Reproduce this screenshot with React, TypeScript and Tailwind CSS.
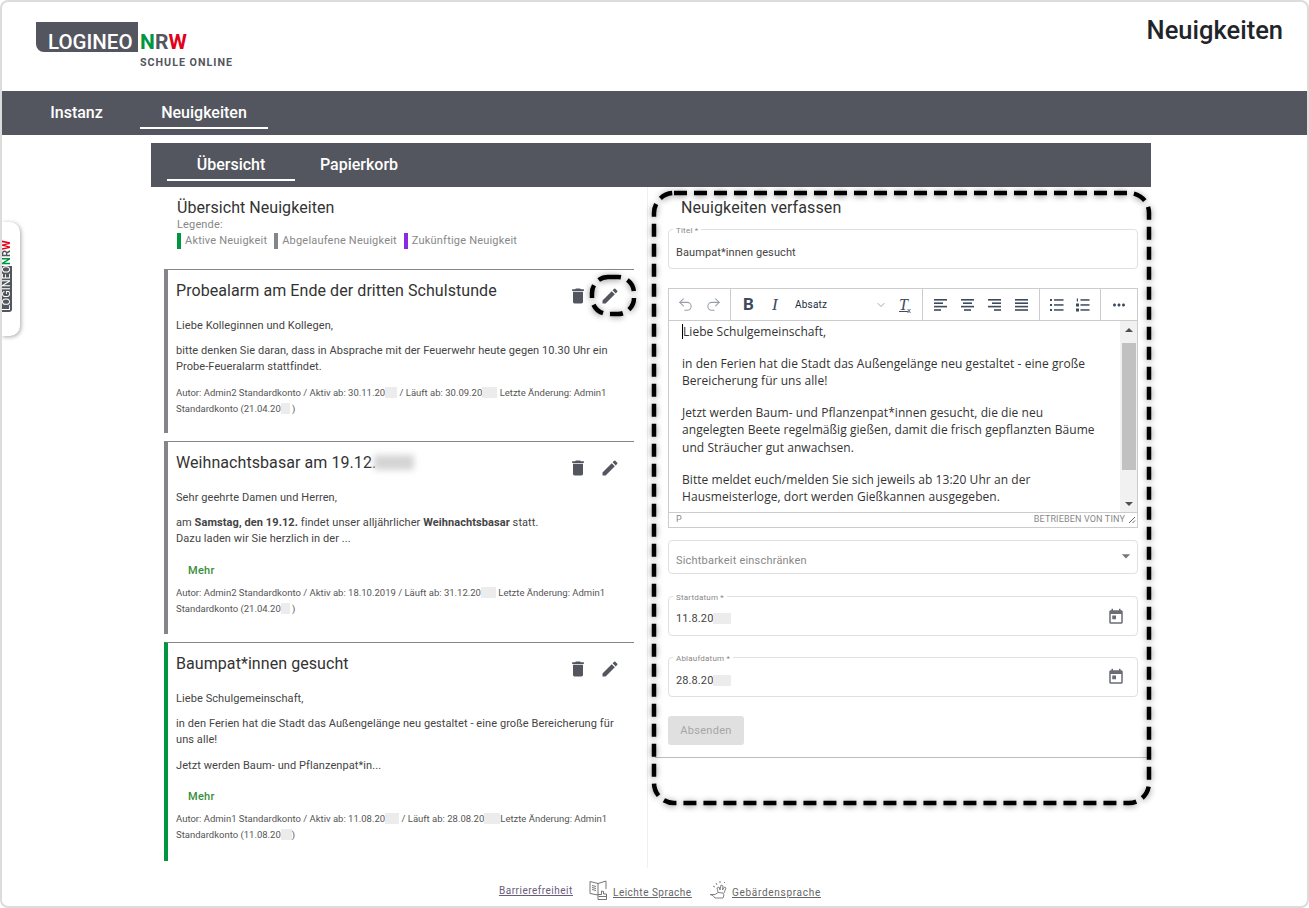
import { MdDelete, MdEdit, MdToday, MdArrowDropDown, MdMoreHoriz } from 'react-icons/md'
import { Undo2, Redo2, ChevronDown } from 'lucide-react'

const Hidden = ({ w }: { w: string }) => (
  <span className={`inline-block h-[11px] align-[-2px] bg-[#ececec] ${w}`} />
)

function Logo() {
  return (
    <div className="w-[200px]">
      <div className="flex items-end h-[30px]">
        <div className="w-[102px] h-[30px] bg-[#53565e] rounded-bl-[8px] flex items-end pl-[12px] text-white text-[20.5px] font-medium leading-[19px] font-['Roboto',sans-serif]">
          LOGINEO
        </div>
        <div className="ml-[2px] text-[21px] leading-[19px] font-bold tracking-[0.1px] font-['Roboto',sans-serif]">
          <span className="text-[#00963f]">N</span>
          <span className="text-[#53565e]">R</span>
          <span className="text-[#e2001a]">W</span>
        </div>
      </div>
      <div className="ml-[104px] mt-[4px] text-[10.7px] leading-[14px] font-bold tracking-[1px] text-[#53565e]">
        SCHULE ONLINE
      </div>
    </div>
  )
}

function SideTab() {
  return (
    <div className="absolute left-0 top-[220px] w-[18px] h-[114px] bg-white rounded-r-[10px] shadow-[1px_1px_4px_rgba(0,0,0,0.35)] pt-[18px]">
      <div className="[writing-mode:vertical-rl] rotate-180 h-[72px] w-[10px] flex items-center justify-start text-[11px] leading-[10px] font-bold">
        <span className="bg-[#53565e] text-white font-normal rounded-tl-[3px] pt-[1px]">LOGINEO</span>
        <span className="text-[#00963f] mt-[1px]">N</span>
        <span className="text-[#53565e]">R</span>
        <span className="text-[#e2001a]">W</span>
      </div>
    </div>
  )
}

function Actions() {
  return (
    <div className="flex items-center gap-[12px] text-[#53565e] mr-[14px] shrink-0">
      <MdDelete className="w-[20px] h-[20px]" />
      <MdEdit className="w-[20px] h-[20px]" />
    </div>
  )
}

function NewsCard({
  color,
  height,
  title,
  children,
}: {
  color: string
  height: string
  title: React.ReactNode
  children: React.ReactNode
}) {
  return (
    <article className={`border-t border-t-[#85868b] border-l-4 pl-[8px] ${color} ${height}`}>
      <div className="flex justify-between pt-[11px]">
        <h3 className="text-[16px] leading-[20px] tracking-[0.07px] text-[#333]">{title}</h3>
        <div className="pt-[5px]">
          <Actions />
        </div>
      </div>
      {children}
    </article>
  )
}

const Para = ({ children }: { children: React.ReactNode }) => (
  <p className="text-[11px] leading-[16px] tracking-[0.08px] text-[#444] mb-[9.4px]">{children}</p>
)

const Meta = ({ children }: { children: React.ReactNode }) => (
  <p className="text-[9.5px] leading-[16px] text-[#555]">{children}</p>
)

const More = () => (
  <div className="pl-[12px] mt-[15.5px] mb-[6px] text-[11px] leading-[16px] font-medium tracking-[0.3px] text-[#388e3c]">Mehr</div>
)

function Outlined({ label, children }: { label: string; children: React.ReactNode }) {
  return (
    <fieldset className="h-[44px] border border-[#e0e0e0] rounded-[4px] px-[7px]">
      <legend className="-ml-[3px] px-[3px] translate-y-[2px] text-[8px] leading-[8px] tracking-[0.2px] text-[#888]">{label}</legend>
      <div className="h-[35px] flex items-center justify-between">{children}</div>
    </fieldset>
  )
}

const AlignIcon = ({ rows }: { rows: [number, number][] }) => (
  <svg width="14" height="14" viewBox="0 0 14 14" className="text-[#3d4a5c]">
    {rows.map(([x, w], i) => (
      <rect key={i} x={x} y={1 + i * 3.4} width={w} height="1.6" fill="currentColor" />
    ))}
  </svg>
)

const ToolDivider = () => <div className="w-px self-stretch bg-[#ccc]" />

function Toolbar() {
  return (
    <div className="flex items-stretch h-[32px] border-b border-[#ccc] text-[#3d4a5c]">
      <div className="w-[61px] flex items-center justify-center gap-[11px] text-[#9aa0a8]">
        <Undo2 className="w-[17px] h-[17px]" strokeWidth={1.5} />
        <Redo2 className="w-[17px] h-[17px]" strokeWidth={1.5} />
      </div>
      <ToolDivider />
      <div className="w-[191px] flex items-center pl-[12px]">
        <span className="w-[16px] text-[17px] font-bold">B</span>
        <span className="ml-[13px] w-[12px] text-[17px] italic font-['Liberation_Serif',serif]">I</span>
        <span className="ml-[11px] w-[80px] text-[10px] tracking-[0.2px] text-[#222f3e]">Absatz</span>
        <ChevronDown className="w-[12px] h-[12px] text-[#888]" strokeWidth={1.5} />
        <span className="ml-[12px] relative w-[14px] text-[16px] leading-[16px] italic underline font-['Liberation_Serif',serif]">
          T<span className="absolute left-[8px] top-[6px] text-[8px] not-italic no-underline font-['Roboto',sans-serif]">x</span>
        </span>
      </div>
      <ToolDivider />
      <div className="w-[116px] flex items-center justify-center gap-[13px]">
        <AlignIcon rows={[[0, 13], [0, 9], [0, 13], [0, 7]]} />
        <AlignIcon rows={[[0, 13], [2, 9], [0, 13], [3, 7]]} />
        <AlignIcon rows={[[0, 13], [4, 9], [0, 13], [6, 7]]} />
        <AlignIcon rows={[[0, 13], [0, 13], [0, 13], [0, 13]]} />
      </div>
      <ToolDivider />
      <div className="w-[60px] flex items-center justify-center gap-[12px]">
        <svg width="14" height="14" viewBox="0 0 14 14" fill="currentColor">
          <rect x="0" y="1" width="2" height="2" />
          <rect x="4" y="1.2" width="9.5" height="1.5" />
          <rect x="0" y="6" width="2" height="2" />
          <rect x="4" y="6.2" width="9.5" height="1.5" />
          <rect x="0" y="11" width="2" height="2" />
          <rect x="4" y="11.2" width="9.5" height="1.5" />
        </svg>
        <svg width="14" height="14" viewBox="0 0 14 14" fill="currentColor">
          <rect x="0.8" y="0.5" width="1.2" height="3" />
          <rect x="0" y="5.5" width="3" height="3" />
          <rect x="0" y="10.5" width="3" height="3" />
          <rect x="4.5" y="1.2" width="9" height="1.5" />
          <rect x="4.5" y="6.2" width="9" height="1.5" />
          <rect x="4.5" y="11.2" width="9" height="1.5" />
        </svg>
      </div>
      <ToolDivider />
      <div className="flex-1 flex items-center justify-center">
        <MdMoreHoriz className="w-[18px] h-[18px]" />
      </div>
    </div>
  )
}

function Editor() {
  return (
    <div className="border border-[#ccc] h-[240px] flex flex-col">
      <Toolbar />
      <div className="flex h-[192px] border-b border-[#ccc]">
        <div className="flex-1 pl-[13px] pr-[16px] pt-[2px] text-[12px] leading-[17.6px] tracking-[0.06px] text-[#333] font-['Open_Sans',sans-serif] overflow-hidden">
          <p className="mb-[14px]">
            <span className="inline-block w-px h-[15px] bg-black align-[-3px]" />
            Liebe Schulgemeinschaft,
          </p>
          <p className="mb-[14px]">in den Ferien hat die Stadt das Außengelänge neu gestaltet - eine große Bereicherung für uns alle!</p>
          <p className="mb-[14px]">Jetzt werden Baum- und Pflanzenpat*innen gesucht, die die neu angelegten Beete regelmäßig gießen, damit die frisch gepflanzten Bäume und Sträucher gut anwachsen.</p>
          <p>Bitte meldet euch/melden Sie sich jeweils ab 13:20 Uhr an der Hausmeisterloge, dort werden Gießkannen ausgegeben.</p>
        </div>
        <div className="w-[17px] shrink-0 bg-[#f1f1f1] flex flex-col items-center">
          <div className="h-[17px] flex items-center">
            <span className="border-x-[4px] border-x-transparent border-b-[4px] border-b-[#505050]" />
          </div>
          <div className="w-[14px] h-[127px] bg-[#c1c1c1] mt-[5px]" />
          <div className="flex-1" />
          <div className="h-[17px] flex items-center">
            <span className="border-x-[4px] border-x-transparent border-t-[4px] border-t-[#505050]" />
          </div>
        </div>
      </div>
      <div className="flex-1 flex items-center justify-between pl-[7px] pr-[1px] text-[9px] text-[#888] tracking-[0.15px]">
        <span>P</span>
        <span className="flex items-center gap-[3px]">
          BETRIEBEN VON TINY
          <svg width="8" height="8" viewBox="0 0 8 8" stroke="#555" strokeWidth="0.9">
            <path d="M1 7 7 1M4.5 7 7 4.5" />
          </svg>
        </span>
      </div>
    </div>
  )
}

function DashedFrame({ className }: { className: string }) {
  return (
    <svg className={`absolute pointer-events-none overflow-visible ${className}`} fill="none">
      <rect
        x="0"
        y="0"
        width="100%"
        height="100%"
        rx="20"
        stroke="#000"
        strokeWidth="4.5"
        strokeDasharray="13 7"
        className="drop-shadow-[0_1px_3px_rgba(0,0,0,0.45)]"
      />
    </svg>
  )
}

function BookIcon() {
  return (
    <svg width="20" height="20" viewBox="0 0 20 20" fill="none" stroke="#666" strokeWidth="0.9">
      <path d="M1 1.5 9 3.5V15L1 13.5ZM9 3.5 17 1V9" />
      <path d="M3 5.5l4 1M3 7.5l4 1M3 9.5l4 1" />
      <path d="M9 14.5h3.5v-3.5l2 .5v2.5h3v5.5h-8.5z" fill="#fff" />
      <path d="M9.5 16.5h8" />
    </svg>
  )
}

function HandsIcon() {
  return (
    <svg width="20" height="20" viewBox="0 0 20 20" fill="none" stroke="#777" strokeWidth="0.9">
      <path d="M1 14.5h5l3-2 5 .5 1 2-1 3H6l-2-2.5z" />
      <path d="M9 12l-1-4 2-1 1 3 1-5 2 1-.5 4 2-3 1.5 1-2 5" />
      <path d="M7 3l1 2M4 6l2 1M11 1v2M16 2l-1 1" />
    </svg>
  )
}

export default function App() {
  return (
    <div className="relative w-[1309px] h-[908px] border-2 border-[#dcdcdc] rounded-[8px] bg-white overflow-hidden font-['Roboto',sans-serif]">
      <header className="h-[89px] flex justify-between pl-[34px] pr-[24px] pt-[20px]">
        <Logo />
        <h1 className="text-[25.5px] leading-[18px] font-medium text-[#212529] -mt-[1px]">Neuigkeiten</h1>
      </header>

      <nav className="h-[44px] bg-[#53565e] flex pl-[26px] text-white text-[16px] font-medium">
        <a className="w-[97px] mr-[15px] h-[38px] flex items-center justify-center pt-[6px]">Instanz</a>
        <a className="w-[128px] h-[38px] flex items-center justify-center border-b-2 border-white pt-[8px]">Neuigkeiten</a>
      </nav>

      <main className="w-[1000px] ml-[149px] mt-[8px]">
        <div className="h-[44px] bg-[#53565e] flex pl-[16px] text-white text-[16px] font-medium">
          <a className="w-[128px] h-[38px] flex items-center justify-center border-b-2 border-white pt-[8px]">Übersicht</a>
          <a className="w-[128px] h-[38px] flex items-center justify-center pt-[6px]">Papierkorb</a>
        </div>

        <div className="flex">
          <section className="w-[497px] h-[681px] border-r border-[#f0f0f0] pl-[13px] pr-[13px]">
            <div className="pl-[13px] pt-[12px] h-[82px]">
              <h2 className="text-[16px] leading-[18px] tracking-[0.05px] text-[#333]">Übersicht Neuigkeiten</h2>
              <div className="mt-[1px] text-[11px] leading-[13px] tracking-[0.15px] text-[#888]">Legende:</div>
              <div className="mt-[2px] flex text-[11px] leading-[16px] tracking-[0.2px] text-[#888]">
                <span className="border-l-4 border-[#00963f] pl-[4px] mr-[7px]">Aktive Neuigkeit</span>
                <span className="border-l-4 border-[#85868b] pl-[4px] mr-[7px]">Abgelaufene Neuigkeit</span>
                <span className="border-l-4 border-[#8a2be2] pl-[4px]">Zukünftige Neuigkeit</span>
              </div>
            </div>

            <div className="flex flex-col gap-[8px]">
              <NewsCard color="border-l-[#85868b]" height="h-[164px]" title="Probealarm am Ende der dritten Schulstunde">
                <div className="mt-[12px]">
                  <Para>Liebe Kolleginnen und Kollegen,</Para>
                  <Para>bitte denken Sie daran, dass in Absprache mit der Feuerwehr heute gegen 10.30 Uhr ein Probe-Feueralarm stattfindet.</Para>
                  <Meta>
                    Autor: Admin2 Standardkonto / Aktiv ab: 30.11.20<Hidden w="w-[12px]" /> / Läuft ab: 30.09.20<Hidden w="w-[15px]" /> Letzte Änderung: Admin1 Standardkonto (21.04.20<Hidden w="w-[9px]" /> )
                  </Meta>
                </div>
              </NewsCard>

              <NewsCard
                color="border-l-[#85868b]"
                height="h-[193px]"
                title={
                  <>
                    Weihnachtsbasar am 19.12.
                    <span className="inline-block -ml-[2px] w-[40px] h-[15px] bg-[#d4d4d4] blur-[3px] align-[-2px]" />
                  </>
                }
              >
                <div className="mt-[12px]">
                  <Para>Sehr geehrte Damen und Herren,</Para>
                  <Para>
                    am <b className="font-bold">Samstag, den 19.12.</b> findet unser alljährlicher <b className="font-bold">Weihnachtsbasar</b> statt.
                    <br />
                    Dazu laden wir Sie herzlich in der ...
                  </Para>
                  <More />
                  <Meta>
                    Autor: Admin2 Standardkonto / Aktiv ab: 18.10.2019 / Läuft ab: 31.12.20<Hidden w="w-[15px]" /> Letzte Änderung: Admin1 Standardkonto (21.04.20<Hidden w="w-[9px]" /> )
                  </Meta>
                </div>
              </NewsCard>

              <NewsCard color="border-l-[#00963f]" height="h-[219px]" title="Baumpat*innen gesucht">
                <div className="mt-[12px]">
                  <Para>Liebe Schulgemeinschaft,</Para>
                  <Para>in den Ferien hat die Stadt das Außengelänge neu gestaltet - eine große Bereicherung für uns alle!</Para>
                  <Para>Jetzt werden Baum- und Pflanzenpat*in...</Para>
                  <More />
                  <Meta>
                    Autor: Admin1 Standardkonto / Aktiv ab: 11.08.20<Hidden w="w-[14px]" /> / Läuft ab: 28.08.20<Hidden w="w-[16px]" />Letzte Änderung: Admin1 Standardkonto (11.08.20<Hidden w="w-[11px]" />)
                  </Meta>
                </div>
              </NewsCard>
            </div>
          </section>

          <section className="w-[503px] pl-[20px] pr-[13px]">
            <h2 className="pl-[13px] pt-[12px] text-[16px] leading-[18px] tracking-[0.1px] text-[#333]">Neuigkeiten verfassen</h2>
            <div className="mt-[8px] flex flex-col">
              <Outlined label="Titel *">
                <span className="pt-[5px] text-[11px] tracking-[0.1px] text-[#444]">Baumpat*innen gesucht</span>
              </Outlined>
              <div className="mt-[19px]">
                <Editor />
              </div>
              <div className="mt-[12px] h-[34px] border border-[#e0e0e0] rounded-[4px] pl-[7px] pr-[1px] flex items-center justify-between text-[11px] tracking-[0.2px] text-[#888]">
                <span className="pt-[9px]">Sichtbarkeit einschränken</span>
                <MdArrowDropDown className="w-[20px] h-[20px] text-[#777] -mt-[2px]" />
              </div>
              <div className="mt-[18px]">
                <Outlined label="Startdatum *">
                  <span className="pt-[4px] text-[11px] tracking-[0.1px] text-[#444]">11.8.20<Hidden w="w-[18px]" /></span>
                  <MdToday className="w-[18px] h-[18px] text-[#6a6d74] mr-[5px] -mt-[2px]" />
                </Outlined>
              </div>
              <div className="mt-[17px]">
                <Outlined label="Ablaufdatum *">
                  <span className="pt-[5px] text-[11px] tracking-[0.1px] text-[#444]">28.8.20<Hidden w="w-[18px]" /></span>
                  <MdToday className="w-[18px] h-[18px] text-[#6a6d74] mr-[5px] -mt-[3px]" />
                </Outlined>
              </div>
              <button className="mt-[19px] w-[76px] h-[29px] pt-[2px] rounded-[3px] bg-[#e0e0e0] text-[11px] tracking-[0.3px] text-[#a6a6a6]">Absenden</button>
            </div>
            <div className="mt-[12px] -ml-[13px] -mr-[13px] h-px bg-[#bdbdbd]" />
          </section>
        </div>
      </main>

      <footer className="absolute left-0 right-0 bottom-[2px] h-[34px] flex items-end pl-[497px] pb-[4px] text-[10px] tracking-[0.5px] text-[#666] underline">
        <a className="text-[#6b5b7b] mb-[2px] w-[90px]">Barrierefreiheit</a>
        <BookIcon />
        <a className="ml-[4px] w-[96px]">Leichte Sprache</a>
        <HandsIcon />
        <a className="ml-[3px] tracking-[0.7px]">Gebärdensprache</a>
      </footer>

      <SideTab />
      <DashedFrame className="left-[652px] top-[191px] w-[495px] h-[610px]" />
      <DashedFrame className="left-[590px] top-[275px] w-[42px] h-[37px] [&_rect]:[rx:16px]" />
    </div>
  )
}
